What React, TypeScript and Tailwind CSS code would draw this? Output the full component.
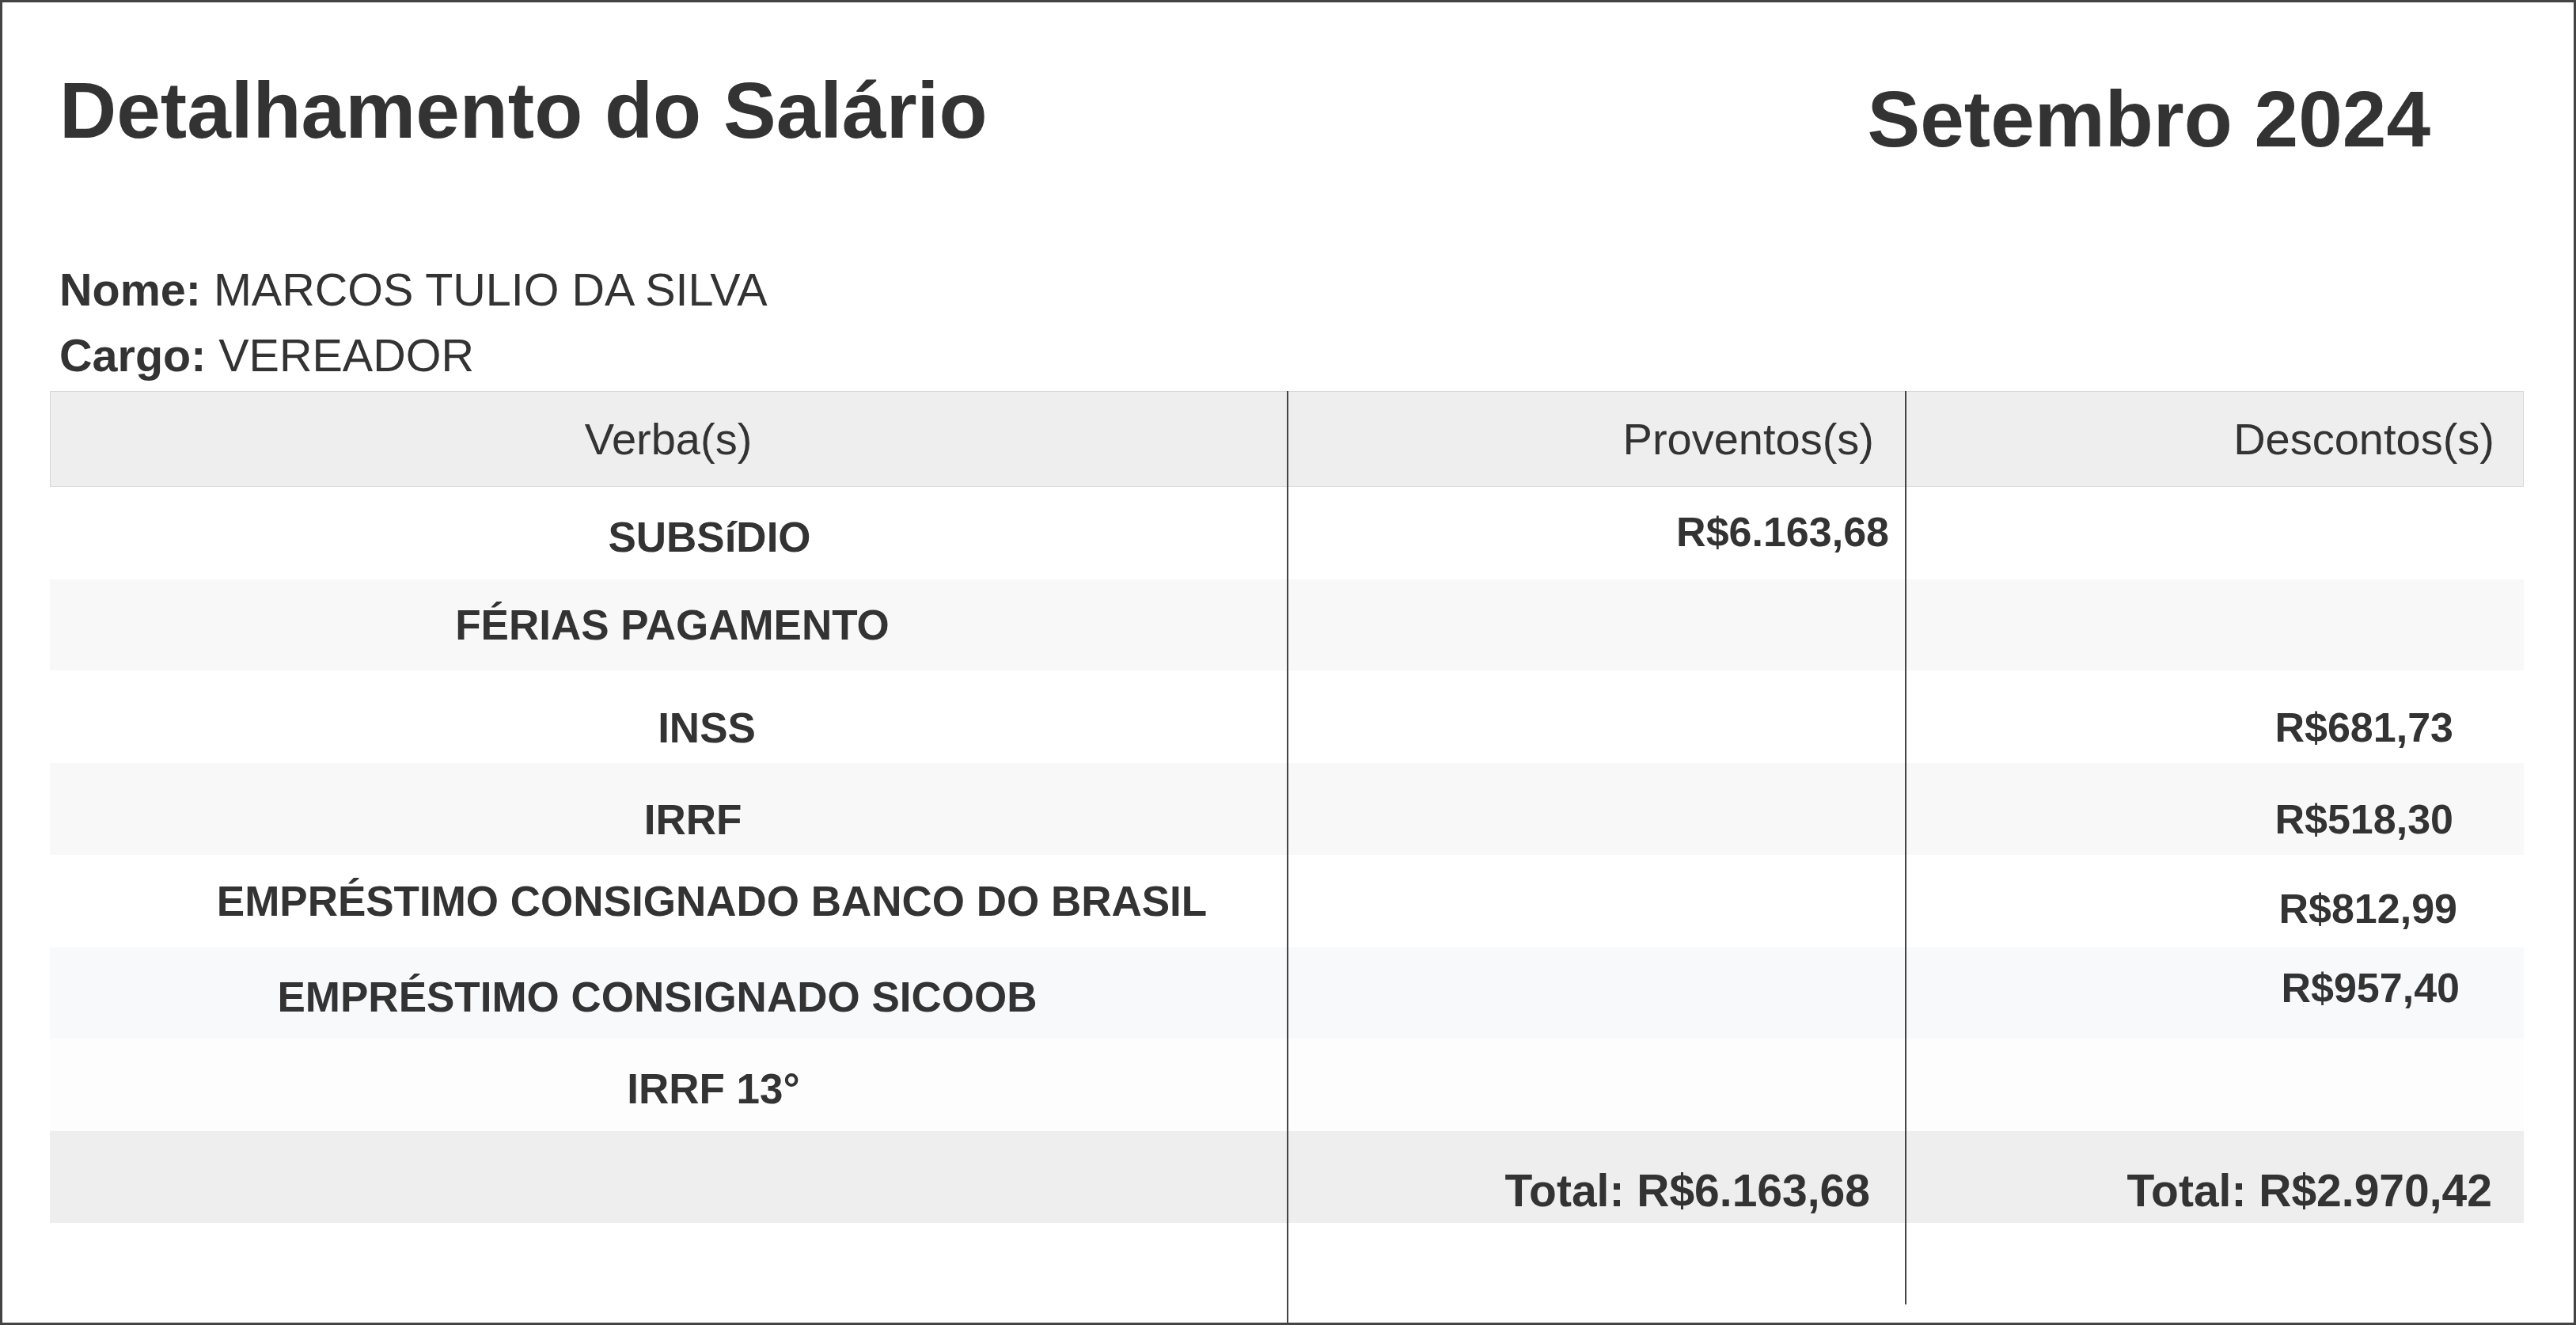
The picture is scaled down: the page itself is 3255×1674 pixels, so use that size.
import React from 'react';

type Linha = {
  verba: string;
  verbaCls: string;
  prov?: string;
  provCls?: string;
  desc?: string;
  descCls?: string;
  h: string;
  bg: string;
};

const linhas: Linha[] = [
  { verba: 'SUBSíDIO', verbaCls: 'pt-[9px] pl-[104px]', prov: 'R$6.163,68', provCls: 'pb-[4px] pr-[20px]', h: 'h-[117px]', bg: 'bg-white' },
  { verba: 'FÉRIAS PAGAMENTO', verbaCls: 'pl-[10px]', h: 'h-[115px]', bg: 'bg-[#f8f8f8]' },
  { verba: 'INSS', verbaCls: 'pt-[27px] pl-[97px]', desc: 'R$681,73', descCls: 'pt-[27px] pr-[89px]', h: 'h-[117px]', bg: 'bg-white' },
  { verba: 'IRRF', verbaCls: 'pt-[26px] pl-[62px]', desc: 'R$518,30', descCls: 'pt-[26px] pr-[89px]', h: 'h-[116px]', bg: 'bg-[#f8f8f8]' },
  { verba: 'EMPRÉSTIMO CONSIGNADO BANCO DO BRASIL', verbaCls: 'pl-[110px]', desc: 'R$812,99', descCls: 'pt-[18px] pr-[84px]', h: 'h-[117px]', bg: 'bg-white' },
  { verba: 'EMPRÉSTIMO CONSIGNADO SICOOB', verbaCls: 'pt-[9px] pr-[28px]', desc: 'R$957,40', descCls: 'pb-[14px] pr-[81px]', h: 'h-[115px]', bg: 'bg-[#f8f9fa]' },
  { verba: 'IRRF 13°', verbaCls: 'pt-[9px] pl-[114px]', h: 'h-[117px]', bg: 'bg-[#fdfdfd]' },
];

export default function App() {
  return (
    <div className="h-screen w-full box-border border-[3px] border-[#444] bg-white flex flex-col text-[#333] font-['Liberation_Sans',Arial,sans-serif] overflow-hidden">
      {/* cabeçalho */}
      <div className="flex justify-between items-start pt-[86px] pl-[72px] pr-[181px]">
        <h1 className="text-[100px] leading-none font-bold">Detalhamento do Salário</h1>
        <h2 className="mt-[11px] text-[100px] leading-none font-bold">Setembro 2024</h2>
      </div>

      <div className="mt-[125px] pl-[72px] text-[57.5px] leading-[83px]">
        <p><span className="font-bold">Nome:</span> MARCOS TULIO DA SILVA</p>
        <p><span className="font-bold">Cargo:</span> VEREADOR</p>
      </div>

      {/* tabela */}
      <div className="mt-[3px] ml-[60px] mr-[63px] flex-1 flex flex-col">
        <div className="grid grid-cols-[1563px_781px_1fr] h-[121px] bg-[#eeeeee] shadow-[inset_0_0_0_1px_#d6d6d6] text-[56px] leading-none">
          <div className="flex items-center justify-center">Verba(s)</div>
          <div className="flex items-center justify-end pr-[39px] border-l-2 border-[#444]">Proventos(s)</div>
          <div className="flex items-center justify-end pr-[37px] border-l-2 border-[#444]">Descontos(s)</div>
        </div>

        {linhas.map((l) => (
          <div key={l.verba} className={`grid grid-cols-[1563px_781px_1fr] ${l.h} ${l.bg} text-[52px] leading-none font-bold`}>
            <div className={`flex items-center justify-center text-[53px] ${l.verbaCls}`}>{l.verba}</div>
            <div className={`flex items-center justify-end border-l-2 border-[#444] ${l.provCls ?? ''}`}>{l.prov}</div>
            <div className={`flex items-center justify-end border-l-2 border-[#444] ${l.descCls ?? ''}`}>{l.desc}</div>
          </div>
        ))}

        <div className="grid grid-cols-[1563px_781px_1fr] h-[116px] bg-[#eeeeee] text-[57px] leading-none font-bold">
          <div />
          <div className="flex items-center justify-end pt-[34px] pr-[44px] border-l-2 border-[#444]">Total: R$6.163,68</div>
          <div className="flex items-center justify-end pt-[34px] pr-[40px] border-l-2 border-[#444]">Total: R$2.970,42</div>
        </div>

        <div className="flex-1 grid grid-cols-[1563px_781px_1fr]">
          <div />
          <div className="border-l-2 border-[#444]" />
          <div className="h-[103px] border-l-2 border-[#444]" />
        </div>
      </div>
    </div>
  );
}
